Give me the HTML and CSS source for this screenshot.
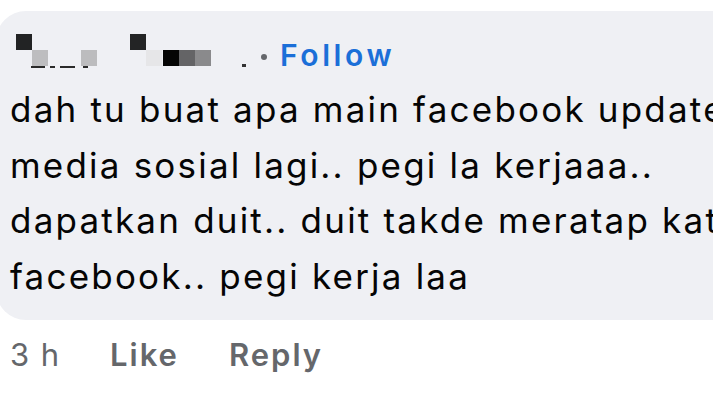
FILE: index.html
```html
<!DOCTYPE html>
<html>
<head>
<meta charset="utf-8">
<link rel="stylesheet" href="styles.css">
</head>
<body>
<div class="comment">
  <div class="bubble">
    <div class="head">
      <div class="name" aria-label="hidden name">
        <span class="px px-a"></span>
        <span class="px px-b"></span>
        <span class="px px-c"></span>
        <span class="px px-d"></span>
        <span class="px px-e"></span>
        <span class="px px-f"></span>
        <span class="px px-g"></span>
        <span class="px px-h"></span>
        <span class="ul ul-1"></span>
        <span class="ul ul-2"></span>
        <span class="ul ul-3"></span>
        <span class="ul ul-4"></span>
        <span class="tick"></span>
      </div>
      <span class="dot"></span>
      <span class="follow">Follow</span>
    </div>
    <div class="text">dah tu buat apa main facebook update<br>media sosial lagi.. pegi la kerjaaa..<br>dapatkan duit.. duit takde meratap kat<br>facebook.. pegi kerja laa</div>
  </div>
  <div class="meta">
    <span class="time">3 h</span>
    <span class="act">Like</span>
    <span class="act">Reply</span>
  </div>
</div>
</body>
</html>
```

FILE: styles.css
```css
html, body {
  margin: 0;
  padding: 0;
  background: #ffffff;
  overflow: hidden;
}
body {
  width: 713px;
  height: 401px;
  font-family: Inter, "Liberation Sans", sans-serif;
  color: #050505;
}
.comment {
  padding-top: 11px;
  width: 713px;
  overflow: hidden;
}
.bubble {
  margin-left: -4px;
  width: 900px;
  height: 309px;
  background: #eff0f4;
  border-radius: 30px;
  box-sizing: border-box;
  padding: 23px 0 0 14px;
}
.head {
  display: flex;
  align-items: center;
  height: 42px;
}
.name {
  position: relative;
  width: 251px;
  height: 42px;
}
.px {
  position: absolute;
  width: 16px;
  height: 16px;
}
.px-a { left: 6px; top: 0; background: #222324; }
.px-b { left: 22px; top: 16px; background: #bdbdbf; }
.px-c { left: 71px; top: 16px; background: #bcbcbe; }
.px-d { left: 120px; top: 0; background: #232425; }
.px-e { left: 136px; top: 16px; background: #e6e6e8; }
.px-f { left: 153px; top: 16px; background: #050505; }
.px-g { left: 169px; top: 16px; background: #646466; }
.px-h { left: 185px; top: 16px; background: #8a8a8c; }
.ul {
  position: absolute;
  top: 32px;
  height: 2px;
  background: #2a2a2a;
}
.ul-1 { left: 21px; width: 14px; }
.ul-2 { left: 40px; width: 5px; }
.ul-3 { left: 50px; width: 15px; }
.ul-4 { left: 73px; width: 5px; }
.tick {
  position: absolute;
  left: 232px;
  top: 30px;
  width: 4px;
  height: 3px;
  background: #333;
}
.dot {
  width: 6px;
  height: 6px;
  border-radius: 50%;
  background: #65676b;
  margin: 4px 0 0 0;
}
.follow {
  margin-left: 13px;
  font-size: 30px;
  font-weight: 600;
  color: #1b6fd8;
  letter-spacing: 3.6px;
}
.text {
  margin-top: 6px;
  font-size: 35px;
  line-height: 55.5px;
  letter-spacing: 2.2px;
  white-space: nowrap;
}
.meta {
  display: flex;
  align-items: baseline;
  padding: 16px 0 0 10px;
  font-size: 31px;
  color: #65676b;
}
.time {
  width: 100px;
  letter-spacing: 1.5px;
}
.act {
  font-weight: 600;
  margin-right: 50px;
  letter-spacing: 2px;
}
```
